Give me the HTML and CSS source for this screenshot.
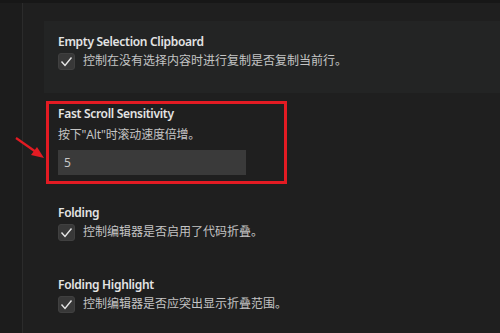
FILE: index.html
```html
<!DOCTYPE html>
<html>
<head>
<meta charset="utf-8">
<link rel="stylesheet" href="styles.css">
</head>
<body>
<div class="topbar"></div>
<div class="layout">
  <div class="sidebar"></div>
  <div class="main">
    <div class="item item-check item-focus">
      <div class="title">Empty Selection Clipboard</div>
      <div class="check-row">
        <span class="checkbox"><svg width="17" height="17" viewBox="0 0 17 17"><polyline points="3.5,8.5 7,12.5 13.5,4.5" fill="none" stroke="#e6e6e6" stroke-width="1.4"/></svg></span>
        <span class="desc">控制在没有选择内容时进行复制是否复制当前行。</span>
      </div>
    </div>
    <div class="item item-input">
      <div class="title">Fast Scroll Sensitivity</div>
      <div class="desc desc-block">按下"Alt"时滚动速度倍增。</div>
      <div class="input">5</div>
    </div>
    <div class="item item-check">
      <div class="title">Folding</div>
      <div class="check-row">
        <span class="checkbox"><svg width="17" height="17" viewBox="0 0 17 17"><polyline points="3.5,8.5 7,12.5 13.5,4.5" fill="none" stroke="#e6e6e6" stroke-width="1.4"/></svg></span>
        <span class="desc">控制编辑器是否启用了代码折叠。</span>
      </div>
    </div>
    <div class="item item-check">
      <div class="title">Folding Highlight</div>
      <div class="check-row">
        <span class="checkbox"><svg width="17" height="17" viewBox="0 0 17 17"><polyline points="3.5,8.5 7,12.5 13.5,4.5" fill="none" stroke="#e6e6e6" stroke-width="1.4"/></svg></span>
        <span class="desc">控制编辑器是否应突出显示折叠范围。</span>
      </div>
    </div>
  </div>
</div>
<div class="redbox"></div>
<svg class="arrow" width="50" height="40" viewBox="0 0 50 40">
  <line x1="16" y1="138" x2="36" y2="152" transform="translate(0,-125)" stroke="#e31b23" stroke-width="2.2"/>
  <polygon points="44,158 31,155 37,147" transform="translate(0,-125)" fill="#e31b23"/>
</svg>
</body>
</html>
```
FILE: styles.css
```css
html, body {
  margin: 0;
  padding: 0;
  height: 100%;
  overflow: hidden;
}
body {
  background: #1f1f1f;
  font-family: "Noto Sans", "Noto Sans CJK SC", sans-serif;
  position: relative;
}
.topbar {
  height: 3px;
  background: #171717;
}
.layout {
  display: flex;
  height: 330px;
}
.sidebar {
  width: 22px;
  background: #1c1c1c;
  border-right: 1px solid #2b2b2b;
  flex: none;
}
.main {
  flex: 1;
  padding-top: 18px;
}
.item {
  margin-left: 21px;
  padding-left: 14px;
  box-sizing: border-box;
}
.item-check {
  height: 72px;
  padding-top: 12px;
}
.item-input {
  height: 99px;
  padding-top: 12px;
}
.item-focus {
  background: #232424;
}
.title {
  font-size: 12px;
  font-weight: 600;
  color: #e4e4e4;
  line-height: 18px;
  letter-spacing: -0.3px;
}
.check-row {
  display: flex;
  align-items: center;
  gap: 8px;
  margin-top: 1px;
  height: 18px;
}
.checkbox {
  width: 17px;
  height: 17px;
  background: #383838;
  border: 1px solid #404040;
  border-radius: 3px;
  box-sizing: border-box;
  display: flex;
  align-items: center;
  justify-content: center;
}
.checkbox svg {
  display: block;
  flex: none;
}
.desc {
  font-size: 12px;
  color: #c4c4c4;
  line-height: 18px;
}
.desc-block {
  margin-top: 3px;
  letter-spacing: -0.2px;
}
.input {
  margin-top: 6px;
  width: 188px;
  height: 25px;
  background: #3a3a3a;
  color: #c8c8c8;
  font-size: 12px;
  line-height: 25px;
  padding-left: 6px;
  box-sizing: border-box;
}
.redbox {
  position: absolute;
  left: 46px;
  top: 101px;
  width: 241px;
  height: 83px;
  border: 3px solid #e31b23;
  box-sizing: border-box;
}
.arrow {
  position: absolute;
  left: 0;
  top: 125px;
}
```
